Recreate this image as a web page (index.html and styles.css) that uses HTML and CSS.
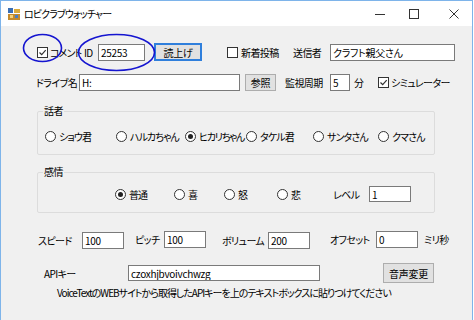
FILE: index.html
```html
<!DOCTYPE html>
<html lang="ja">
<head>
    <meta charset="UTF-8">
    <title>ロビクラブウォッチャー</title>
    <link rel="stylesheet" href="styles.css">
</head>
<body>
    <div class="window">
        <div class="titlebar">
            <svg class="app-icon" width="12" height="12" viewBox="0 0 12 12">
                <rect x="0" y="0" width="5" height="5" fill="#3a6fb5"/>
                <rect x="6" y="1" width="6" height="4" fill="#d9a93b"/>
                <rect x="0" y="6" width="12" height="6" fill="#c48a2c"/>
                <rect x="2" y="7" width="3" height="3" fill="#f4d27a"/>
                <rect x="7" y="7" width="3" height="3" fill="#4b7fc2"/>
            </svg>
            <span class="title">ロビクラブウォッチャー</span>
            <svg class="ctl ctl-min" width="10" height="10" viewBox="0 0 10 10">
                <line x1="0" y1="5.5" x2="10" y2="5.5" stroke="#333" stroke-width="1"/>
            </svg>
            <svg class="ctl ctl-max" width="10" height="10" viewBox="0 0 10 10">
                <rect x="0.5" y="0.5" width="9" height="9" fill="none" stroke="#333" stroke-width="1"/>
            </svg>
            <svg class="ctl ctl-close" width="10" height="10" viewBox="0 0 10 10">
                <path d="M0.5 0.5 L9.5 9.5 M9.5 0.5 L0.5 9.5" stroke="#333" stroke-width="1"/>
            </svg>
        </div>

        <div class="client">
            <div class="row row-top">
                <span class="chk checked chk-comment"></span>
                <span class="lbl w-comment">コメント</span>
                <span class="lbl w-id">ID</span>
                <input class="txt w-idbox" type="text" value="25253">
                <button class="btn btn-read focused">読上げ</button>
                <span class="chk chk-new"></span>
                <span class="lbl w-new">新着投稿</span>
                <span class="lbl w-sender">送信者</span>
                <input class="txt w-senderbox" type="text" value="クラフト親父さん">
            </div>

            <div class="row row-drive">
                <span class="lbl w-drive">ドライブ名</span>
                <input class="txt w-drivebox" type="text" value="H:">
                <button class="btn btn-browse">参照</button>
                <span class="lbl w-period">監視周期</span>
                <input class="txt w-periodbox" type="text" value="5">
                <span class="lbl w-min">分</span>
                <span class="chk checked chk-sim"></span>
                <span class="lbl">シミュレーター</span>
            </div>

            <fieldset class="group group-speaker">
                <legend>話者</legend>
                <div class="radios">
                    <span class="opt w-sho"><span class="radio"></span>ショウ君</span>
                    <span class="opt w-haruka"><span class="radio"></span>ハルカちゃん</span>
                    <span class="opt w-hikari"><span class="radio checked"></span>ヒカリちゃん</span>
                    <span class="opt w-takeru"><span class="radio"></span>タケル君</span>
                    <span class="opt w-santa"><span class="radio"></span>サンタさん</span>
                    <span class="opt"><span class="radio"></span>クマさん</span>
                </div>
            </fieldset>

            <fieldset class="group group-emotion">
                <legend>感情</legend>
                <div class="radios">
                    <span class="opt w-normal"><span class="radio checked"></span>普通</span>
                    <span class="opt w-joy"><span class="radio"></span>喜</span>
                    <span class="opt w-anger"><span class="radio"></span>怒</span>
                    <span class="opt w-sad"><span class="radio"></span>悲</span>
                    <span class="lbl w-level">レベル</span>
                    <input class="txt w-levelbox" type="text" value="1">
                </div>
            </fieldset>

            <div class="row row-voice">
                <span class="lbl w-speed">スピード</span>
                <input class="txt w-num" type="text" value="100">
                <span class="lbl w-pitch raise">ピッチ</span>
                <input class="txt w-num raise" type="text" value="100">
                <span class="lbl w-volume">ボリューム</span>
                <input class="txt w-num" type="text" value="200">
                <span class="lbl w-offset raise">オフセット</span>
                <input class="txt w-num raise" type="text" value="0">
                <span class="lbl w-ms raise">ミリ秒</span>
            </div>

            <div class="row row-api">
                <span class="lbl w-api">APIキー</span>
                <input class="txt w-apibox" type="text" value="czoxhjbvoivchwzg">
                <button class="btn btn-voice">音声変更</button>
            </div>

            <p class="hint">VoiceTextのWEBサイトから取得したAPIキーを上のテキストボックスに貼りつけてください</p>
        </div>

        <svg class="marks" width="474" height="320" viewBox="0 0 474 320">
            <ellipse cx="42.5" cy="48" rx="19" ry="13.5" fill="none" stroke="#1515d0" stroke-width="1.6"/>
            <ellipse cx="116.5" cy="52.5" rx="38" ry="18" fill="none" stroke="#1515d0" stroke-width="1.6"/>
        </svg>
    </div>
</body>
</html>
```

FILE: styles.css
```css
body {
    margin: 0;
    background-color: #ffffff;
    font-family: "Noto Sans CJK JP", "Noto Sans", sans-serif;
    font-size: 10px;
    letter-spacing: -0.6px;
    font-feature-settings: "palt";
    color: #000000;
}

.window {
    position: relative;
    width: 473px;
    height: 320px;
    box-sizing: border-box;
    border: 1px solid #7eb4ea;
    border-bottom: none;
    background-color: #f0f0f0;
    overflow: hidden;
}

.titlebar {
    display: flex;
    align-items: center;
    height: 25px;
    background-color: #ffffff;
}

.app-icon {
    margin-left: 7px;
}

.title {
    margin-left: 4px;
    font-size: 10px;
    letter-spacing: -0.9px;
}

.ctl-min {
    margin-left: auto;
}

.ctl-max {
    margin-left: 24px;
}

.ctl-close {
    margin-left: 30px;
    margin-right: 13px;
}

.client {
    padding-left: 34px;
}

.row {
    display: flex;
    align-items: center;
}

.lbl {
    white-space: nowrap;
    flex-shrink: 0;
}

.chk {
    width: 11px;
    height: 11px;
    box-sizing: border-box;
    border: 1px solid #333333;
    background-color: #ffffff;
    flex-shrink: 0;
}

.chk.checked {
    background-image: url("data:image/svg+xml,%3Csvg xmlns='http://www.w3.org/2000/svg' width='9' height='9'%3E%3Cpath d='M1.5 4.5 L3.7 6.7 L7.7 2.2' fill='none' stroke='%23333' stroke-width='1.2'/%3E%3C/svg%3E");
    background-repeat: no-repeat;
}

.txt {
    height: 17px;
    box-sizing: border-box;
    border: 1px solid #7a7a7a;
    background-color: #ffffff;
    padding: 0 2px;
    margin: 0;
    font-family: inherit;
    font-size: 10px;
    letter-spacing: -0.3px;
    font-feature-settings: "palt";
    color: #000000;
    outline: none;
    flex-shrink: 0;
}

.btn {
    height: 17px;
    box-sizing: border-box;
    border: 1px solid #adadad;
    background-color: #e1e1e1;
    padding: 0;
    margin: 0;
    font-family: inherit;
    font-size: 10px;
    letter-spacing: -0.3px;
    font-feature-settings: "palt";
    color: #000000;
    flex-shrink: 0;
}

.btn.focused {
    border: 2px solid #2f7fdc;
}

/* first row */
.row-top {
    margin-top: 17px;
    height: 18px;
}

.chk-comment {
    margin-left: 2px;
}

.w-comment {
    margin-left: 2px;
    width: 32px;
    letter-spacing: -0.9px;
}

.w-id {
    margin-left: 2px;
    width: 12px;
}

.w-idbox {
    margin-left: 2px;
    width: 47px;
}

.btn-read {
    margin-left: 9px;
    width: 48px;
    height: 18px;
}

.chk-new {
    margin-left: 25px;
}

.w-new {
    margin-left: 3px;
    width: 44px;
}

.w-sender {
    margin-left: 8px;
    width: 34px;
}

.w-senderbox {
    margin-left: 3px;
    width: 125px;
}

/* drive row */
.row-drive {
    margin-top: 13px;
    height: 17px;
}

.w-drive {
    margin-left: 1px;
    width: 42px;
}

.w-drivebox {
    margin-left: 1px;
    width: 161px;
}

.btn-browse {
    margin-left: 5px;
    width: 31px;
}

.w-period {
    margin-left: 9px;
    width: 43px;
}

.w-periodbox {
    margin-left: 2px;
    width: 20px;
}

.w-min {
    margin-left: 4px;
    width: 12px;
}

.chk-sim {
    margin-left: 12px;
    margin-right: 2px;
}

/* group boxes */
.group {
    margin: 13px 0 0 2px;
    width: 398px;
    box-sizing: border-box;
    padding: 0 0 11px 7px;
    border: 1px solid #dcdcdc;
    border-radius: 2px;
}

.group legend {
    margin-left: -2px;
    padding: 0 1px;
    line-height: 14px;
}

.radios {
    display: flex;
    align-items: center;
    height: 14px;
    margin-top: 11px;
}

.opt {
    display: flex;
    align-items: center;
    white-space: nowrap;
    flex-shrink: 0;
    letter-spacing: -0.9px;
}

.radio {
    width: 11px;
    height: 11px;
    box-sizing: border-box;
    border: 1px solid #333333;
    border-radius: 50%;
    background-color: #ffffff;
    margin-right: 3px;
    display: flex;
    align-items: center;
    justify-content: center;
    flex-shrink: 0;
}

.radio.checked::after {
    content: "";
    width: 5px;
    height: 5px;
    border-radius: 50%;
    background-color: #222222;
}

.w-sho { width: 71px; }
.w-haruka { width: 69px; }
.w-hikari { width: 61px; letter-spacing: -1.3px; }
.w-takeru { width: 67px; }
.w-santa { width: 65px; }

.group-emotion {
    margin-top: 10px;
    padding-bottom: 10px;
}

.group-emotion .radios {
    margin-top: 7px;
    height: 16px;
}

.w-normal { margin-left: 70px; width: 59px; }
.w-joy { width: 50px; }
.w-anger { width: 53px; }
.w-sad { width: 56px; }

.w-level {
    width: 36px;
}

.w-levelbox {
    width: 42px;
    height: 16px;
}

/* voice parameters */
.row-voice {
    margin-top: 19px;
    height: 17px;
}

.raise {
    margin-bottom: 3px;
}

.w-speed {
    margin-left: 3px;
    width: 44px;
}

.w-num {
    width: 42px;
}

.w-pitch {
    margin-left: 11px;
    width: 29px;
}

.w-volume {
    margin-left: 16px;
    width: 46px;
}

.w-offset {
    margin-left: 20px;
    width: 46px;
}

.w-ms {
    margin-left: 6px;
}

/* api row */
.row-api {
    margin-top: 14px;
    height: 20px;
}

.w-api {
    margin-left: 9px;
    width: 84px;
}

.w-apibox {
    width: 192px;
    height: 16px;
}

.btn-voice {
    margin-left: 63px;
    width: 51px;
    height: 20px;
}

.hint {
    margin: 3px 0 0 22px;
    line-height: 13px;
    white-space: nowrap;
    letter-spacing: -1px;
}

.marks {
    position: absolute;
    left: -1px;
    top: -1px;
    pointer-events: none;
}
```
